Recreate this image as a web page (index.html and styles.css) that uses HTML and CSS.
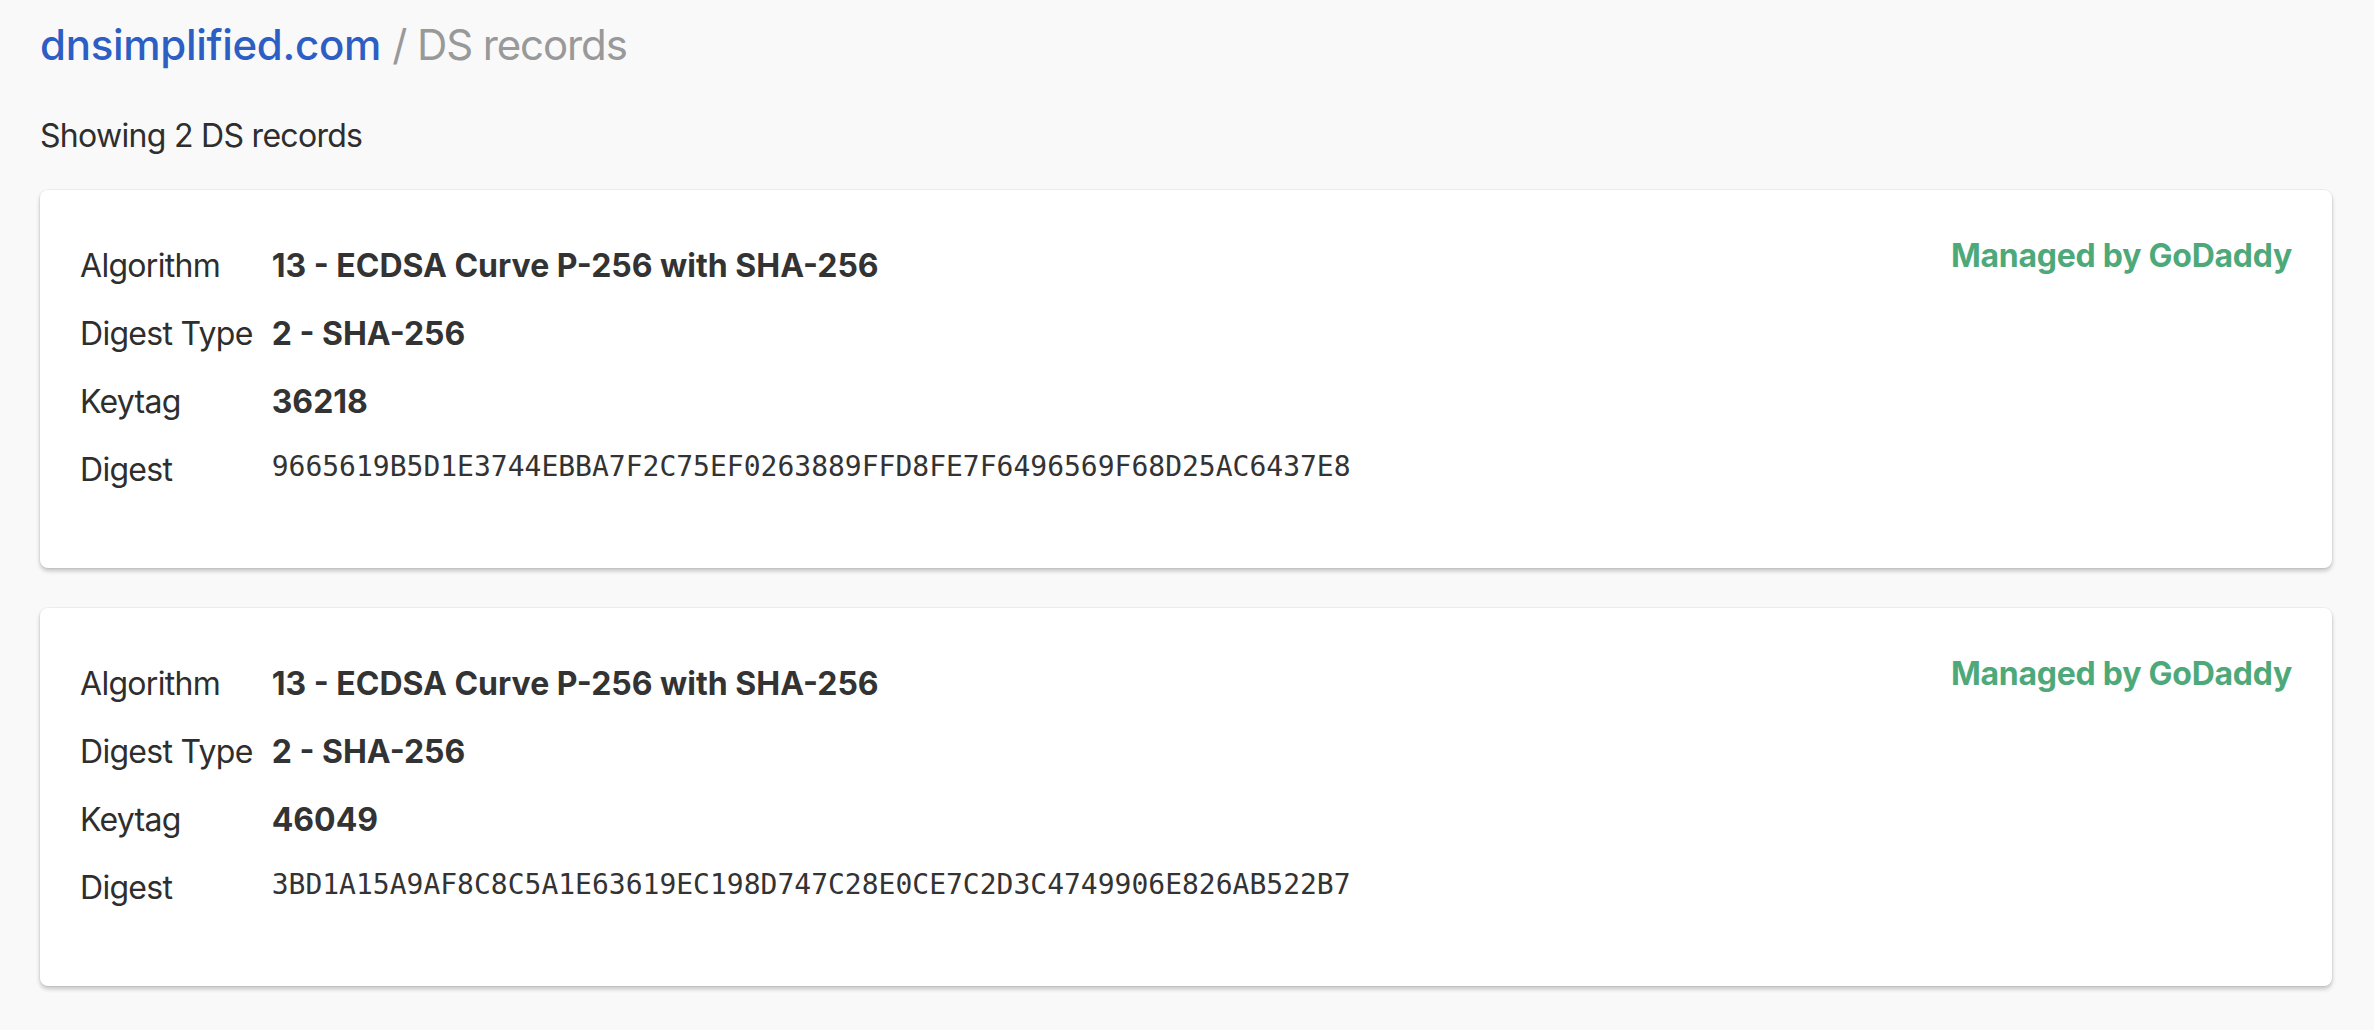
FILE: index.html
```html
<!DOCTYPE html>
<html lang="en">
<head>
<meta charset="utf-8">
<title>dnsimplified.com / DS records</title>
<link rel="stylesheet" href="styles.css">
</head>
<body>
<main class="page">
  <h1 class="title"><a class="domain" href="#">dnsimplified.com</a> <span class="crumb">/ DS records</span></h1>
  <p class="count">Showing 2 DS records</p>

  <section class="card">
    <div class="fields">
      <div class="label">Algorithm</div><div class="value">13 - ECDSA Curve P-256 with SHA-256</div>
      <div class="label">Digest Type</div><div class="value">2 - SHA-256</div>
      <div class="label">Keytag</div><div class="value">36218</div>
      <div class="label">Digest</div><div class="value mono">9665619B5D1E3744EBBA7F2C75EF0263889FFD8FE7F6496569F68D25AC6437E8</div>
    </div>
    <div class="managed">Managed by GoDaddy</div>
  </section>

  <section class="card">
    <div class="fields">
      <div class="label">Algorithm</div><div class="value">13 - ECDSA Curve P-256 with SHA-256</div>
      <div class="label">Digest Type</div><div class="value">2 - SHA-256</div>
      <div class="label">Keytag</div><div class="value">46049</div>
      <div class="label">Digest</div><div class="value mono">3BD1A15A9AF8C8C5A1E63619EC198D747C28E0CE7C2D3C4749906E826AB522B7</div>
    </div>
    <div class="managed">Managed by GoDaddy</div>
  </section>
</main>
</body>
</html>
```

FILE: styles.css
```css
html, body {
  margin: 0;
  padding: 0;
  background: #f9f9f9;
}

body {
  font-family: Inter, "Liberation Sans", Arial, sans-serif;
  color: #333333;
  font-size: 32px;
  line-height: 48px;
}

.page {
  padding: 20px 42px 40px 40px;
}

.title {
  margin: 0;
  font-size: 42px;
  line-height: 50px;
  font-weight: 500;
}

.domain {
  color: #2c5ec4;
  text-decoration: none;
  letter-spacing: -0.3px;
}

.crumb {
  color: #999999;
  font-weight: 400;
  letter-spacing: -1.1px;
}

.count {
  margin: 42px 0 30px 0;
  font-size: 32px;
  line-height: 48px;
  color: #2e2e2e;
  letter-spacing: -0.7px;
}

.card {
  display: flex;
  justify-content: space-between;
  align-items: flex-start;
  background: #ffffff;
  border-radius: 8px;
  padding: 42px 40px 64px 40px;
  margin-bottom: 40px;
  box-shadow: 0 3px 4px rgba(10, 10, 10, 0.22), 0 0 0 1px rgba(10, 10, 10, 0.04);
}

.fields {
  display: grid;
  grid-template-columns: auto auto;
  column-gap: 19px;
  align-items: start;
}

.label,
.value {
  padding: 10px 0;
  line-height: 48px;
}

.label {
  font-weight: 400;
  color: #2e2e2e;
  letter-spacing: -0.7px;
}

.value {
  font-weight: 700;
  color: #333333;
}

.value.mono {
  font-family: "DejaVu Sans Mono", "Liberation Mono", monospace;
  font-weight: 400;
  font-size: 28px;
  line-height: 42px;
}

.managed {
  color: #4ea97a;
  font-weight: 700;
  line-height: 48px;
  white-space: nowrap;
  letter-spacing: -0.25px;
}
```
